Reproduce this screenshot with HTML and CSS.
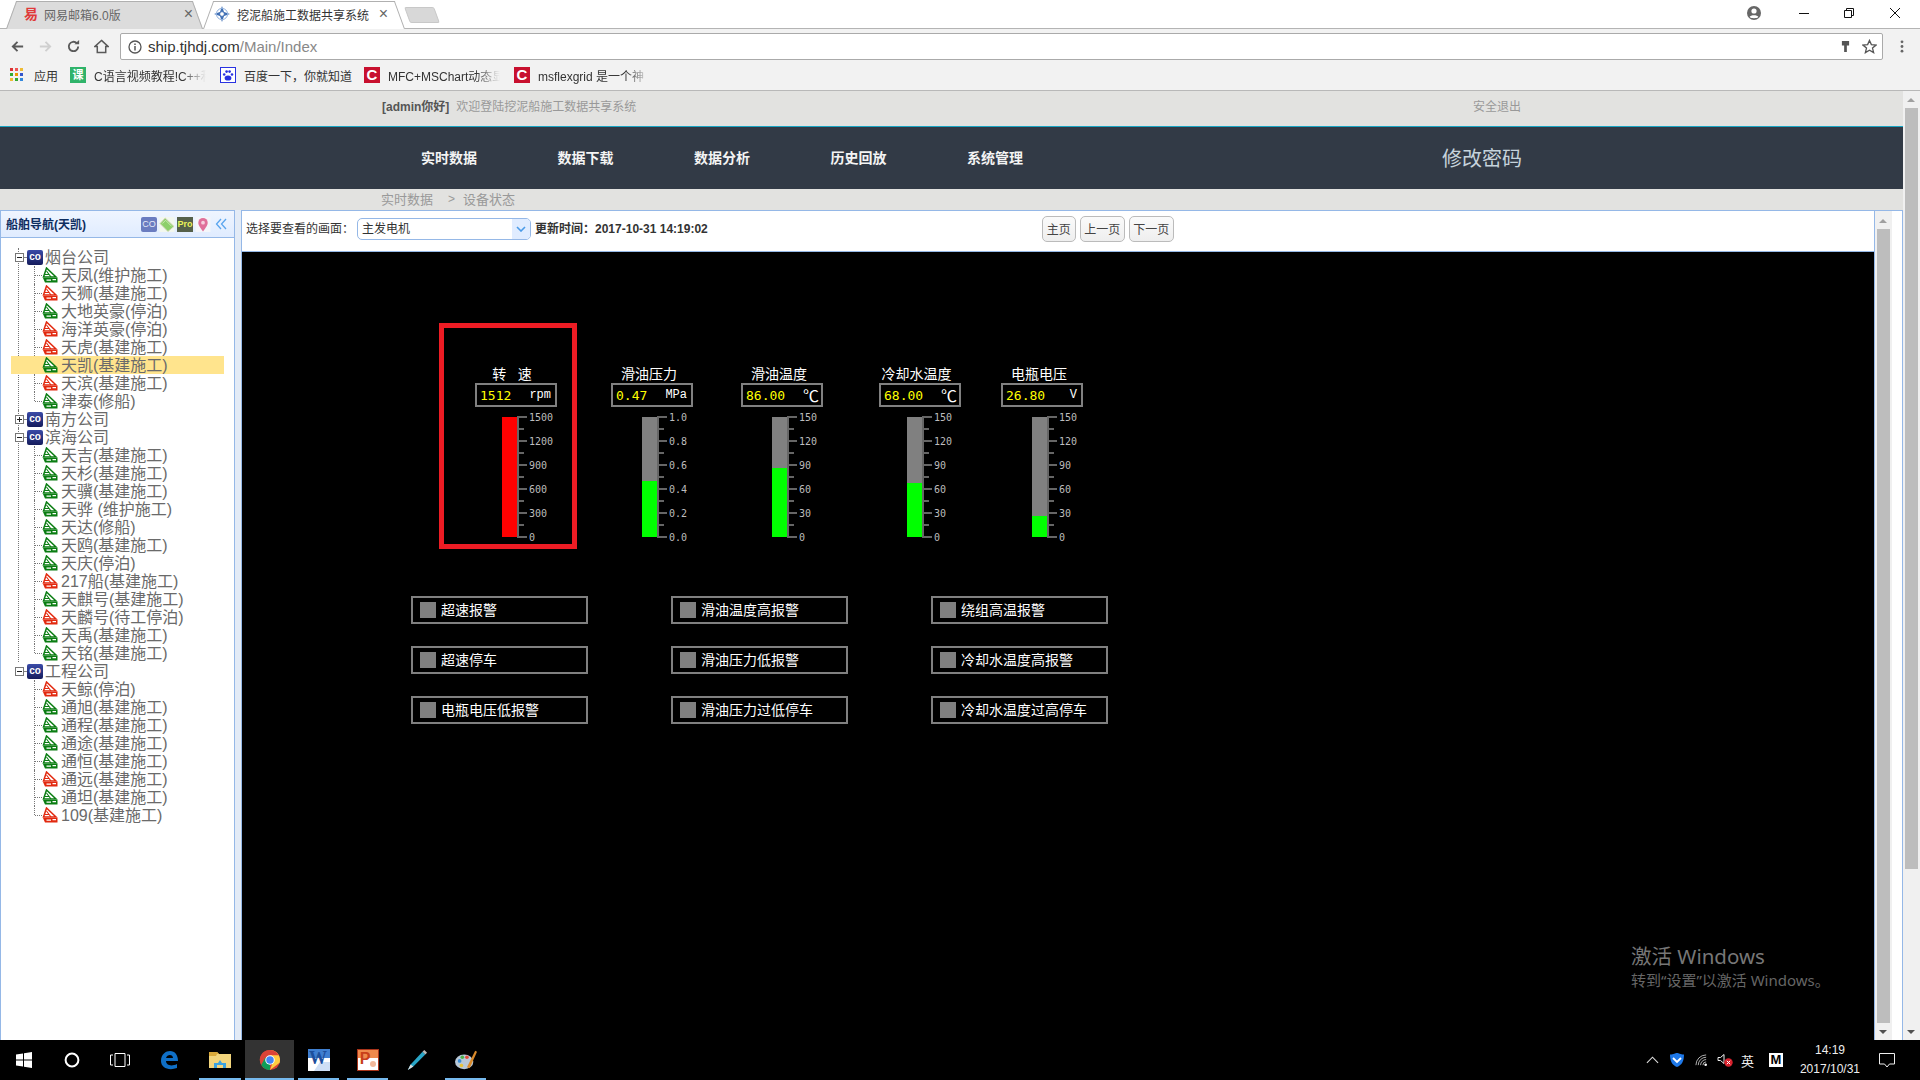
FILE: index.html
```html
<!DOCTYPE html>
<html lang="zh-CN">
<head>
    <meta charset="UTF-8">
    <meta name="viewport" content="width=device-width, initial-scale=1.0">
    <title>挖泥船施工数据共享系统</title>
    <link rel="stylesheet" href="styles.css">
</head>
<body>
    <svg class="defs" width="0" height="0">
        <symbol id="ship" viewBox="0 0 16 16">
            <path d="M4.5 1 L1.5 10 H14 Z" fill="#fff" stroke="currentColor" stroke-width="1.5"/>
            <path d="M4.5 4 L9 10 M3 7.5 H7" stroke="currentColor" stroke-width="1.1" fill="none"/>
            <path d="M1 11 H15.5 V15.5 H3 Z" fill="currentColor"/>
            <path d="M4.5 13.2 H9 M10.5 12.6 H14" stroke="#fff" stroke-width="1.3"/>
        </symbol>
        <symbol id="minus" viewBox="0 0 9 9">
            <rect x=".5" y=".5" width="8" height="8" fill="#fff" stroke="#777"/>
            <path d="M2 4.5 H7" stroke="#222"/>
        </symbol>
        <symbol id="plus" viewBox="0 0 9 9">
            <rect x=".5" y=".5" width="8" height="8" fill="#fff" stroke="#777"/>
            <path d="M2 4.5 H7 M4.5 2 V7" stroke="#222"/>
        </symbol>
    </svg>

    <div class="tabstrip">
        <div class="tab">
            <span class="tab-fav mail">易</span>
            <span class="tab-title">网易邮箱6.0版</span>
            <span class="tab-close">×</span>
        </div>
        <div class="tab active">
            <svg class="tab-fav" viewBox="0 0 16 16"><path d="M8 0 L10 6 L16 8 L10 10 L8 16 L6 10 L0 8 L6 6 Z" fill="#3f6fb5"/><circle cx="8" cy="8" r="2.4" fill="#fff" stroke="#3f6fb5"/><circle cx="8" cy="8" r="5.6" fill="none" stroke="#8fb0dc"/></svg>
            <span class="tab-title">挖泥船施工数据共享系统</span>
            <span class="tab-close">×</span>
        </div>
        <div class="newtab"></div>
        <div class="winctl">
            <svg class="profile" viewBox="0 0 14 14"><circle cx="7" cy="7" r="7" fill="#666"/><circle cx="7" cy="5" r="2.6" fill="#fff"/><path d="M2.6 11 C3.5 8.5 10.5 8.5 11.4 11 C10 12.6 4 12.6 2.6 11Z" fill="#fff"/></svg>
            <svg class="winbtn" viewBox="0 0 12 12"><path d="M1 6.5 H11" stroke="#111" fill="none"/></svg>
            <svg class="winbtn" viewBox="0 0 12 12"><path d="M1.5 3.5 H8.5 V10.5 H1.5 Z M3.5 3.5 V1.5 H10.5 V8.5 H8.5" stroke="#111" fill="none"/></svg>
            <svg class="winbtn last" viewBox="0 0 12 12"><path d="M1 1 L11 11 M11 1 L1 11" stroke="#111" fill="none"/></svg>
        </div>
    </div>

    <div class="toolbar">
        <svg class="navicon" viewBox="0 0 16 16"><path d="M14 8 H3 M8 3 L3 8 L8 13" stroke="#5a5a5a" stroke-width="2" fill="none"/></svg>
        <svg class="navicon" viewBox="0 0 16 16"><path d="M2 8 H13 M8 3 L13 8 L8 13" stroke="#cfcfcf" stroke-width="2" fill="none"/></svg>
        <svg class="navicon" viewBox="0 0 16 16"><path d="M13 8 A5 5 0 1 1 11.5 4.4" stroke="#5a5a5a" stroke-width="2" fill="none"/><path d="M9 5.5 H14 V1 Z" fill="#5a5a5a"/></svg>
        <svg class="navicon" viewBox="0 0 16 16"><path d="M8 1.5 L15 8 H12.5 V14.5 H3.5 V8 H1 Z" stroke="#5a5a5a" stroke-width="1.6" fill="none"/></svg>
        <div class="address">
            <svg class="info" viewBox="0 0 14 14"><circle cx="7" cy="7" r="6" stroke="#555" stroke-width="1.3" fill="none"/><path d="M7 6 V10.5 M7 3.5 V5" stroke="#555" stroke-width="1.5"/></svg>
            <span class="url">ship.tjhdj.com<span class="url-path">/Main/Index</span></span>
            <svg class="addr-key" viewBox="0 0 10 14"><path d="M1 1 H9 V6 H6.5 V13 H3.5 V6 H1 Z" fill="#555"/></svg>
            <svg class="addr-star" viewBox="0 0 16 16"><path d="M8 1.5 L10 6 L15 6.5 L11.2 9.7 L12.4 14.5 L8 12 L3.6 14.5 L4.8 9.7 L1 6.5 L6 6 Z" stroke="#555" stroke-width="1.4" fill="none"/></svg>
        </div>
        <svg class="menu-dots" viewBox="0 0 4 14"><circle cx="2" cy="2" r="1.5" fill="#666"/><circle cx="2" cy="7" r="1.5" fill="#666"/><circle cx="2" cy="12" r="1.5" fill="#666"/></svg>
    </div>

    <div class="bookmarks">
        <div class="bm apps-bm">
            <svg class="bm-icon apps" viewBox="0 0 14 14">
                <rect x="0" y="0" width="3" height="3" fill="#d33"/><rect x="5" y="0" width="3" height="3" fill="#e55"/><rect x="10" y="0" width="3" height="3" fill="#eb3"/>
                <rect x="0" y="5" width="3" height="3" fill="#3a3"/><rect x="5" y="5" width="3" height="3" fill="#e90"/><rect x="10" y="5" width="3" height="3" fill="#35c"/>
                <rect x="0" y="10" width="3" height="3" fill="#eb3"/><rect x="5" y="10" width="3" height="3" fill="#3a3"/><rect x="10" y="10" width="3" height="3" fill="#38d"/>
            </svg>
            <span>应用</span>
        </div>
        <div class="bm bm-c"><span class="bm-square green">课</span><span class="bm-text">C语言视频教程!C++和</span></div>
        <div class="bm bm-baidu">
            <svg class="bm-icon" viewBox="0 0 16 16"><rect x=".5" y=".5" width="15" height="15" fill="#fff" stroke="#2932e1"/><ellipse cx="8" cy="11" rx="3.4" ry="2.6" fill="#2932e1"/><circle cx="4.2" cy="7.5" r="1.3" fill="#2932e1"/><circle cx="6.6" cy="4.6" r="1.3" fill="#2932e1"/><circle cx="9.6" cy="4.6" r="1.3" fill="#2932e1"/><circle cx="12" cy="7.5" r="1.3" fill="#2932e1"/></svg>
            <span>百度一下，你就知道</span>
        </div>
        <div class="bm bm-mfc"><span class="bm-square red">C</span><span class="bm-text">MFC+MSChart动态显</span></div>
        <div class="bm bm-flex"><span class="bm-square red">C</span><span class="bm-text">msflexgrid 是一个神</span></div>
    </div>

    <div class="viewport">
        <div class="page">
            <div class="topbar">
                <span class="hello">[admin你好]</span>
                <span class="welcome">欢迎登陆挖泥船施工数据共享系统</span>
                <a class="logout">安全退出</a>
            </div>
            <div class="nav">
                <a class="nav-item">实时数据</a>
                <a class="nav-item">数据下载</a>
                <a class="nav-item">数据分析</a>
                <a class="nav-item">历史回放</a>
                <a class="nav-item">系统管理</a>
                <a class="nav-pass">修改密码</a>
            </div>
            <div class="crumb">
                <span>实时数据</span>
                <span class="crumb-sep">&gt;</span>
                <span>设备状态</span>
            </div>

            <div class="main">
                <div class="side">
                    <div class="side-head">
                        <span class="side-title">船舶导航(天凯)</span>
                        <span class="tool tool-co">CO</span>
                        <svg class="tool" viewBox="0 0 16 16"><rect width="16" height="16" fill="#f2f7ee"/><path d="M0.5 7 L6 1 L15.5 10 L9 15.5 Z" fill="#8ccf6a" stroke="#d8d8c0"/><path d="M3 7 L6.5 3.5 L13 10" stroke="#c8eab0" fill="none"/></svg>
                        <span class="tool tool-pro">Pro</span>
                        <svg class="tool" viewBox="0 0 16 16"><rect width="16" height="16" fill="#f4f6fa"/><path d="M8 15.5 C4 10 3 8 3 6 A5 5 0 0 1 13 6 C13 8 12 10 8 15.5Z" fill="#e0709a"/><circle cx="8" cy="6" r="2" fill="#f6d0de"/></svg>
                        <svg class="collapse" viewBox="0 0 12 12"><path d="M6 1 L1.5 6 L6 11 M11 1 L6.5 6 L11 11" stroke="#5aa5ee" stroke-width="1.3" fill="none"/></svg>
                    </div>
                    <ul class="tree">
                        <li class="root">
                            <div class="root-row"><svg class="expander"><use href="#minus"/></svg><span class="co">co</span><span class="label">烟台公司</span></div>
                            <ul class="kids">
                                <li><svg class="ship run"><use href="#ship"/></svg><span class="label">天凤(维护施工)</span></li>
                                <li><svg class="ship off"><use href="#ship"/></svg><span class="label">天狮(基建施工)</span></li>
                                <li><svg class="ship run"><use href="#ship"/></svg><span class="label">大地英豪(停泊)</span></li>
                                <li><svg class="ship off"><use href="#ship"/></svg><span class="label">海洋英豪(停泊)</span></li>
                                <li><svg class="ship off"><use href="#ship"/></svg><span class="label">天虎(基建施工)</span></li>
                                <li class="selected"><svg class="ship run"><use href="#ship"/></svg><span class="label">天凯(基建施工)</span></li>
                                <li><svg class="ship off"><use href="#ship"/></svg><span class="label">天滨(基建施工)</span></li>
                                <li><svg class="ship run"><use href="#ship"/></svg><span class="label">津泰(修船)</span></li>
                            </ul>
                        </li>
                        <li class="root">
                            <div class="root-row"><svg class="expander"><use href="#plus"/></svg><span class="co">co</span><span class="label">南方公司</span></div>
                        </li>
                        <li class="root">
                            <div class="root-row"><svg class="expander"><use href="#minus"/></svg><span class="co">co</span><span class="label">滨海公司</span></div>
                            <ul class="kids">
                                <li><svg class="ship run"><use href="#ship"/></svg><span class="label">天吉(基建施工)</span></li>
                                <li><svg class="ship run"><use href="#ship"/></svg><span class="label">天杉(基建施工)</span></li>
                                <li><svg class="ship run"><use href="#ship"/></svg><span class="label">天骥(基建施工)</span></li>
                                <li><svg class="ship run"><use href="#ship"/></svg><span class="label">天骅 (维护施工)</span></li>
                                <li><svg class="ship run"><use href="#ship"/></svg><span class="label">天达(修船)</span></li>
                                <li><svg class="ship run"><use href="#ship"/></svg><span class="label">天鸥(基建施工)</span></li>
                                <li><svg class="ship run"><use href="#ship"/></svg><span class="label">天庆(停泊)</span></li>
                                <li><svg class="ship off"><use href="#ship"/></svg><span class="label">217船(基建施工)</span></li>
                                <li><svg class="ship run"><use href="#ship"/></svg><span class="label">天麒号(基建施工)</span></li>
                                <li><svg class="ship off"><use href="#ship"/></svg><span class="label">天麟号(待工停泊)</span></li>
                                <li><svg class="ship run"><use href="#ship"/></svg><span class="label">天禹(基建施工)</span></li>
                                <li><svg class="ship run"><use href="#ship"/></svg><span class="label">天铭(基建施工)</span></li>
                            </ul>
                        </li>
                        <li class="root">
                            <div class="root-row"><svg class="expander"><use href="#minus"/></svg><span class="co">co</span><span class="label">工程公司</span></div>
                            <ul class="kids">
                                <li><svg class="ship off"><use href="#ship"/></svg><span class="label">天鲸(停泊)</span></li>
                                <li><svg class="ship run"><use href="#ship"/></svg><span class="label">通旭(基建施工)</span></li>
                                <li><svg class="ship run"><use href="#ship"/></svg><span class="label">通程(基建施工)</span></li>
                                <li><svg class="ship run"><use href="#ship"/></svg><span class="label">通途(基建施工)</span></li>
                                <li><svg class="ship run"><use href="#ship"/></svg><span class="label">通恒(基建施工)</span></li>
                                <li><svg class="ship off"><use href="#ship"/></svg><span class="label">通远(基建施工)</span></li>
                                <li><svg class="ship run"><use href="#ship"/></svg><span class="label">通坦(基建施工)</span></li>
                                <li><svg class="ship off"><use href="#ship"/></svg><span class="label">109(基建施工)</span></li>
                            </ul>
                        </li>
                    </ul>
                </div>

                <div class="splitter"></div>

                <div class="content">
                    <div class="content-main">
                        <div class="filter">
                            <span class="filter-label">选择要查看的画面：</span>
                            <div class="combo">
                                <span class="combo-text">主发电机</span>
                                <span class="combo-arrow"><svg viewBox="0 0 10 6"><path d="M1 1 L5 5 L9 1" stroke="#4a9be8" stroke-width="1.6" fill="none"/></svg></span>
                            </div>
                            <span class="updated">更新时间：2017-10-31 14:19:02</span>
                            <div class="pager">
                                <a class="btn btn-home">主页</a>
                                <a class="btn">上一页</a>
                                <a class="btn">下一页</a>
                            </div>
                        </div>

                        <div class="canvas">
                            <div class="highlight"></div>

                            <div class="gauges">
                                <div class="gauge g-speed">
                                    <div class="gauge-title">转&nbsp;&nbsp;&nbsp;速</div>
                                    <div class="readout"><span class="val">1512</span><span class="unit">rpm</span></div>
                                    <div class="scale">
                                        <div class="bar"><div class="fill alarm" style="height:120px"></div></div>
                                        <div class="ticks">
                                            <div class="tick major"><i></i><span>1500</span></div>
                                            <div class="tick"><i></i></div>
                                            <div class="tick major"><i></i><span>1200</span></div>
                                            <div class="tick"><i></i></div>
                                            <div class="tick major"><i></i><span>900</span></div>
                                            <div class="tick"><i></i></div>
                                            <div class="tick major"><i></i><span>600</span></div>
                                            <div class="tick"><i></i></div>
                                            <div class="tick major"><i></i><span>300</span></div>
                                            <div class="tick"><i></i></div>
                                            <div class="tick major"><i></i><span>0</span></div>
                                        </div>
                                    </div>
                                </div>

                                <div class="gauge g-press">
                                    <div class="gauge-title">滑油压力</div>
                                    <div class="readout"><span class="val">0.47</span><span class="unit">MPa</span></div>
                                    <div class="scale">
                                        <div class="bar"><div class="fill" style="height:56px"></div></div>
                                        <div class="ticks">
                                            <div class="tick major"><i></i><span>1.0</span></div>
                                            <div class="tick"><i></i></div>
                                            <div class="tick major"><i></i><span>0.8</span></div>
                                            <div class="tick"><i></i></div>
                                            <div class="tick major"><i></i><span>0.6</span></div>
                                            <div class="tick"><i></i></div>
                                            <div class="tick major"><i></i><span>0.4</span></div>
                                            <div class="tick"><i></i></div>
                                            <div class="tick major"><i></i><span>0.2</span></div>
                                            <div class="tick"><i></i></div>
                                            <div class="tick major"><i></i><span>0.0</span></div>
                                        </div>
                                    </div>
                                </div>

                                <div class="gauge g-oil">
                                    <div class="gauge-title">滑油温度</div>
                                    <div class="readout"><span class="val">86.00</span><span class="unit deg">℃</span></div>
                                    <div class="scale">
                                        <div class="bar"><div class="fill" style="height:69px"></div></div>
                                        <div class="ticks">
                                            <div class="tick major"><i></i><span>150</span></div>
                                            <div class="tick"><i></i></div>
                                            <div class="tick major"><i></i><span>120</span></div>
                                            <div class="tick"><i></i></div>
                                            <div class="tick major"><i></i><span>90</span></div>
                                            <div class="tick"><i></i></div>
                                            <div class="tick major"><i></i><span>60</span></div>
                                            <div class="tick"><i></i></div>
                                            <div class="tick major"><i></i><span>30</span></div>
                                            <div class="tick"><i></i></div>
                                            <div class="tick major"><i></i><span>0</span></div>
                                        </div>
                                    </div>
                                </div>

                                <div class="gauge g-water">
                                    <div class="gauge-title">冷却水温度</div>
                                    <div class="readout"><span class="val">68.00</span><span class="unit deg">℃</span></div>
                                    <div class="scale">
                                        <div class="bar"><div class="fill" style="height:54px"></div></div>
                                        <div class="ticks">
                                            <div class="tick major"><i></i><span>150</span></div>
                                            <div class="tick"><i></i></div>
                                            <div class="tick major"><i></i><span>120</span></div>
                                            <div class="tick"><i></i></div>
                                            <div class="tick major"><i></i><span>90</span></div>
                                            <div class="tick"><i></i></div>
                                            <div class="tick major"><i></i><span>60</span></div>
                                            <div class="tick"><i></i></div>
                                            <div class="tick major"><i></i><span>30</span></div>
                                            <div class="tick"><i></i></div>
                                            <div class="tick major"><i></i><span>0</span></div>
                                        </div>
                                    </div>
                                </div>

                                <div class="gauge g-volt">
                                    <div class="gauge-title">电瓶电压</div>
                                    <div class="readout"><span class="val">26.80</span><span class="unit">V</span></div>
                                    <div class="scale">
                                        <div class="bar"><div class="fill" style="height:21px"></div></div>
                                        <div class="ticks">
                                            <div class="tick major"><i></i><span>150</span></div>
                                            <div class="tick"><i></i></div>
                                            <div class="tick major"><i></i><span>120</span></div>
                                            <div class="tick"><i></i></div>
                                            <div class="tick major"><i></i><span>90</span></div>
                                            <div class="tick"><i></i></div>
                                            <div class="tick major"><i></i><span>60</span></div>
                                            <div class="tick"><i></i></div>
                                            <div class="tick major"><i></i><span>30</span></div>
                                            <div class="tick"><i></i></div>
                                            <div class="tick major"><i></i><span>0</span></div>
                                        </div>
                                    </div>
                                </div>
                            </div>

                            <div class="alarms">
                                <div class="alarm-box"><i></i>超速报警</div>
                                <div class="alarm-box"><i></i>滑油温度高报警</div>
                                <div class="alarm-box"><i></i>绕组高温报警</div>
                                <div class="alarm-box"><i></i>超速停车</div>
                                <div class="alarm-box"><i></i>滑油压力低报警</div>
                                <div class="alarm-box"><i></i>冷却水温度高报警</div>
                                <div class="alarm-box"><i></i>电瓶电压低报警</div>
                                <div class="alarm-box"><i></i>滑油压力过低停车</div>
                                <div class="alarm-box"><i></i>冷却水温度过高停车</div>
                            </div>

                            <div class="activate">
                                <div class="activate-big">激活 Windows</div>
                                <div class="activate-small">转到“设置”以激活 Windows。</div>
                            </div>
                        </div>
                    </div>
                    <div class="scrollbar inner">
                        <div class="arrow-up"></div>
                        <div class="thumb"></div>
                        <div class="arrow-down"></div>
                    </div>
                </div>
            </div>
        </div>
        <div class="scrollbar outer">
            <div class="arrow-up"></div>
            <div class="thumb"></div>
            <div class="arrow-down"></div>
        </div>
    </div>

    <div class="taskbar">
        <div class="slot sys"><svg class="ti" viewBox="0 0 16 16"><path d="M0 2.4 L7 1.4 V7.5 H0 Z M8 1.2 L16 0 V7.5 H8 Z M0 8.5 H7 V14.6 L0 13.6 Z M8 8.5 H16 V16 L8 14.8 Z" fill="#fff"/></svg></div>
        <div class="slot sys"><svg class="ti" viewBox="0 0 16 16"><circle cx="8" cy="8" r="6.4" stroke="#fff" stroke-width="2" fill="none"/></svg></div>
        <div class="slot sys"><svg class="ti wide" viewBox="0 0 20 14"><path d="M5 .5 H15 V13.5 H5 Z" stroke="#fff" fill="none"/><path d="M3 2 H.5 V12 H3 M17 2 H19.5 V12 H17" stroke="#fff" fill="none"/></svg></div>
        <div class="slot pad"><svg class="ta" viewBox="0 0 22 22"><path d="M3 12 C3 5 8 2 12 2 C17 2 20 6 20 12 H8 C8 16 13 18 19 15 V19 C11 22 3 19 3 12Z M8 9 H15 C15 5 9 5 8 9Z" fill="#0f6fc6" fill-rule="evenodd"/></svg></div>
        <div class="slot pad running"><svg class="ta" viewBox="0 0 22 22"><path d="M0 3 H8 L10 5 H22 V19 H0 Z" fill="#f2d57c"/><path d="M0 3 H8 L10 5 H8 L7 7 H0 Z" fill="#d9a93a"/><path d="M5 19 V14 H9 L11 11 L13 14 H17 V19 H14 V16 H8 V19Z" fill="#3ba3e0"/></svg></div>
        <div class="slot running current"><svg class="ta" viewBox="0 0 24 24"><circle cx="12" cy="12" r="11" fill="#db4437"/><path d="M12 12 L2.5 17.5 A11 11 0 0 1 3 5.5 Z" fill="#db4437"/><path d="M12 12 L12 23 A11 11 0 0 1 2.5 17.5 L7 9 Z" fill="#0f9d58"/><path d="M12 1 A11 11 0 0 1 22.5 15 L12 23 L16.5 10 L12 7 Z" fill="#ffcd40"/><path d="M12 1 A11 11 0 0 1 21.5 6.8 L12 6.8 L7 9.5 L3 5.5 A11 11 0 0 1 12 1Z" fill="#db4437"/><circle cx="12" cy="12" r="5.2" fill="#fff"/><circle cx="12" cy="12" r="4.1" fill="#4285f4"/></svg></div>
        <div class="slot running"><svg class="ta" viewBox="0 0 22 22"><rect x="0" y="0" width="22" height="22" fill="#fff"/><path d="M0 0 H22 V9 H0Z" fill="#3f7fd0"/><path d="M12 13 H22 V22 H6Z" fill="#cfdff5"/><text x="10" y="15" text-anchor="middle" font-family="Liberation Serif" font-weight="700" font-size="18" fill="#1d4f9c">W</text></svg></div>
        <div class="slot running"><svg class="ta" viewBox="0 0 22 22"><rect x="0" y="0" width="22" height="22" fill="#fff"/><path d="M0 0 H22 V9 H0Z" fill="#ef8a4c"/><rect x=".5" y=".5" width="21" height="21" fill="none" stroke="#a8341a"/><text x="8" y="15" text-anchor="middle" font-family="Liberation Sans" font-weight="700" font-size="16" fill="#c8401a">P</text><circle cx="16" cy="15" r="3" fill="#f3b89a"/></svg></div>
        <div class="slot"><svg class="ta" viewBox="0 0 24 24"><path d="M2 23 L5 17 L18 3 L21 6 L8 19 Z" fill="#2aa6c8"/><path d="M18 3 L20 1 L23 4 L21 6 Z" fill="#bbb"/><path d="M2 23 L5 17 L8 19 Z" fill="#ddd"/></svg></div>
        <div class="slot running"><svg class="ta" viewBox="0 0 24 24"><ellipse cx="10" cy="14" rx="10" ry="8" fill="#b9c9d8"/><circle cx="5" cy="13" r="2" fill="#3a8fd8"/><circle cx="8" cy="9" r="2" fill="#4bb04b"/><circle cx="13" cy="9" r="2" fill="#e24a3a"/><circle cx="7" cy="18" r="2" fill="#e8c43a"/><path d="M13 20 L22 2 L24 3 L16 21 Z" fill="#d98a2b"/></svg></div>

        <div class="tray">
            <svg class="tray-chev" viewBox="0 0 14 8"><path d="M1 7 L7 1 L13 7" stroke="#ddd" stroke-width="1.2" fill="none"/></svg>
            <svg class="tray-shield" viewBox="0 0 16 16"><path d="M1 2.5 C5 2.5 6 1 8 1 C10 1 11 2.5 15 2.5 C15 9 13 13 8 15 C3 13 1 9 1 2.5Z" fill="#1e78e8"/><path d="M4 6 L8 10 L12 6" stroke="#fff" stroke-width="1.8" fill="none"/></svg>
            <svg class="tray-wifi" viewBox="0 0 14 14"><path d="M1 12 A11 11 0 0 1 12 1 M3.5 12 A8.5 8.5 0 0 1 12 3.5 M6 12 A6 6 0 0 1 12 6 M8.5 12 A3.5 3.5 0 0 1 12 8.5" stroke="#bbb" fill="none"/><circle cx="11.5" cy="11.5" r="1.4" fill="#fff"/></svg>
            <svg class="tray-vol" viewBox="0 0 16 14"><path d="M1 4.5 H3.5 L7 1.5 V10.5 L3.5 7.5 H1 Z" stroke="#eee" fill="none"/><circle cx="11.5" cy="9.5" r="4.2" fill="#d8202c"/><path d="M9.8 7.8 L13.2 11.2 M13.2 7.8 L9.8 11.2" stroke="#fff"/></svg>
            <span class="tray-ime">英</span>
            <span class="tray-m">M</span>
            <div class="clock"><span>14:19</span><span>2017/10/31</span></div>
            <svg class="tray-note" viewBox="0 0 16 15"><path d="M.5 .5 H15.5 V11 H10.5 L8 14 L5.5 11 H.5 Z" stroke="#eee" fill="none"/></svg>
        </div>
    </div>
</body>
</html>
```

FILE: styles.css
```css
* {
    box-sizing: border-box;
}
html, body {
    margin: 0;
    height: 100%;
}
body {
    width: 1920px;
    height: 1080px;
    overflow: hidden;
    display: flex;
    flex-direction: column;
    font-family: "Liberation Sans", "Noto Sans CJK SC", sans-serif;
    font-size: 12px;
    background: #f2f2f2;
}
ul {
    list-style: none;
    margin: 0;
    padding: 0;
}
.defs {
    position: absolute;
}

/* browser chrome */
.tabstrip {
    height: 29px;
    display: flex;
    align-items: flex-end;
    padding-left: 6px;
    background: #fff;
    border-bottom: 1px solid #b4b4b4;
}
.tab {
    position: relative;
    width: 197px;
    height: 28px;
    margin-bottom: -1px;
    display: flex;
    align-items: center;
    padding: 0 10px 2px 18px;
    color: #666;
    z-index: 1;
}
.tab::before, .tab::after {
    content: "";
    position: absolute;
    top: 0;
    bottom: 0;
    width: 55%;
    background: #dcdcdc;
    border-top: 1px solid #b0b0b0;
    z-index: -1;
}
.tab::before {
    left: 0;
    border-left: 1px solid #b0b0b0;
    transform: skewX(-20deg);
    transform-origin: bottom left;
}
.tab::after {
    right: 0;
    border-right: 1px solid #b0b0b0;
    transform: skewX(20deg);
    transform-origin: bottom right;
}
.tab.active {
    width: 202px;
    color: #333;
    padding: 0 17px 2px 11px;
}
.tab.active::before, .tab.active::after {
    background: #fff;
}
.tab.active .tab-fav {
    margin-right: 7px;
}
.tab-fav {
    width: 16px;
    height: 16px;
    margin-right: 4px;
    flex: none;
}
.mail {
    color: #e03a3a;
    font-weight: 700;
    font-size: 14px;
    line-height: 16px;
}
.tab-title {
    flex: 1;
    white-space: nowrap;
}
.tab-close {
    font-size: 16px;
    line-height: 16px;
    color: #666;
}
.newtab {
    width: 30px;
    height: 16px;
    margin: 0 0 5px 2px;
    background: #d8d8d8;
    border: 1px solid #c8c8c8;
    border-radius: 2px;
    transform: skewX(20deg);
}
.winctl {
    margin-left: auto;
    align-self: stretch;
    display: flex;
    align-items: center;
    padding-bottom: 3px;
}
.profile {
    width: 14px;
    height: 14px;
    margin-right: 37px;
}
.winbtn {
    width: 12px;
    height: 12px;
    margin-right: 33px;
}
.winbtn.last {
    margin-left: 1px;
    margin-right: 19px;
}
.toolbar {
    height: 31px;
    display: flex;
    align-items: center;
    padding: 4px 0 0 10px;
}
.navicon {
    width: 15px;
    height: 15px;
    margin-right: 13px;
    flex: none;
}
.address {
    width: 1763px;
    height: 27px;
    margin-left: -2px;
    display: flex;
    align-items: center;
    padding: 0 5px 0 7px;
    background: #fff;
    border: 1px solid #aaa;
    border-radius: 2px;
}
.info {
    width: 14px;
    height: 14px;
    margin-right: 6px;
}
.url {
    flex: 1;
    font-size: 15px;
    color: #333;
}
.url-path {
    color: #888;
}
.addr-key {
    width: 9px;
    height: 13px;
    margin-right: 12px;
}
.addr-star {
    width: 15px;
    height: 15px;
}
.menu-dots {
    width: 4px;
    height: 13px;
    margin-left: 17px;
}
.bookmarks {
    height: 31px;
    display: flex;
    align-items: center;
    padding-left: 10px;
    border-bottom: 1px solid #b8b8b8;
    color: #333;
}
.bm {
    display: flex;
    align-items: center;
    white-space: nowrap;
    flex: none;
}
.bm-icon {
    width: 16px;
    height: 16px;
    margin-right: 8px;
}
.bm-icon.apps {
    width: 14px;
    height: 14px;
    margin-right: 10px;
}
.apps-bm {
    width: 60px;
}
.bm-c {
    width: 150px;
}
.bm-baidu {
    width: 144px;
}
.bm-mfc {
    width: 150px;
}
.bm-square {
    width: 16px;
    height: 16px;
    margin-right: 8px;
    color: #fff;
    text-align: center;
    line-height: 16px;
    font-size: 11px;
    font-weight: 700;
    flex: none;
}
.bm-square.green {
    background: #2fb36a;
}
.bm-square.red {
    background: #c8102e;
    font-size: 15px;
}
.bm-text {
    -webkit-mask-image: linear-gradient(to right, #000 88px, transparent 112px);
    mask-image: linear-gradient(to right, #000 88px, transparent 112px);
}

/* page */
.viewport {
    flex: 1;
    min-height: 0;
    display: flex;
}
.page {
    flex: 1;
    min-width: 0;
    display: flex;
    flex-direction: column;
    background: #e2e2e0;
}
.topbar {
    height: 36px;
    display: flex;
    align-items: center;
    padding: 0 382px 7px;
    border-bottom: 1px solid #18a5c4;
    color: #999;
}
.hello {
    font-weight: 700;
    color: #555;
    margin-right: 7px;
}
.logout {
    margin-left: auto;
}
.nav {
    height: 62px;
    display: flex;
    align-items: center;
    gap: 80.5px;
    padding: 0 381px 2px 421px;
    background: #323a46;
}
.nav-item {
    font-size: 14px;
    font-weight: 700;
    color: #f4f4f4;
}
.nav-pass {
    margin-left: auto;
    font-size: 20px;
    color: #c6d3dc;
}
.crumb {
    height: 21px;
    display: flex;
    align-items: center;
    padding: 0 0 2px 381px;
    font-size: 13px;
    color: #999;
}
.crumb-sep {
    margin: 0 8px 0 15px;
    font-size: 12px;
}
.main {
    flex: 1;
    min-height: 0;
    display: flex;
}

/* tree panel */
.side {
    width: 235px;
    flex: none;
    background: #fff;
    border: 1px solid #95b8e7;
    border-bottom: 0;
    overflow: hidden;
}
.side-head {
    height: 27px;
    display: flex;
    align-items: center;
    padding: 0 7px 0 5px;
    background: linear-gradient(#eff5ff, #e0ecff);
    border-bottom: 1px solid #95b8e7;
}
.side-title {
    flex: 1;
    font-weight: 700;
    color: #0e2d5f;
    padding-bottom: 2px;
}
.tool {
    width: 16px;
    height: 15px;
    margin-left: 2px;
    flex: none;
}
.tool-co {
    background: #6a7cc0;
    color: #e4e8f8;
    font-size: 9px;
    line-height: 15px;
    text-align: center;
    border-radius: 2px;
}
.tool-pro {
    background: #55604a;
    color: #eaf25a;
    font-size: 9px;
    font-weight: 700;
    line-height: 15px;
    text-align: center;
}
.collapse {
    width: 12px;
    height: 12px;
    margin-left: 4px;
}
.tree {
    margin: 10px 0 0 17px;
    font-size: 16px;
    color: #6a6a6a;
}
.root {
    border-left: 1px dotted #777;
}
.root:last-child {
    border-left-color: transparent;
}
.root-row {
    height: 18px;
    display: flex;
    align-items: center;
    white-space: nowrap;
    background: linear-gradient(#888, #888) no-repeat 4px 9px / 4px 1px;
}
.label {
    margin-top: -2px;
}
.expander {
    width: 9px;
    height: 9px;
    margin: 0 3px 0 -4px;
    flex: none;
}
.co {
    width: 16px;
    height: 15px;
    margin-right: 2px;
    flex: none;
    background: linear-gradient(#3b4ba8, #151c5c);
    border-radius: 2px;
    color: #fff;
    font-size: 10px;
    font-weight: 700;
    line-height: 13px;
    text-align: center;
}
.kids {
    margin-left: 15px;
}
.kids li {
    position: relative;
    height: 18px;
    display: flex;
    align-items: center;
    padding-left: 7px;
    white-space: nowrap;
    border-left: 1px dotted #777;
}
.kids li::before {
    content: "";
    position: absolute;
    left: 0;
    top: 9px;
    width: 7px;
    border-top: 1px dotted #777;
}
.kids li:last-child {
    border-left-color: transparent;
}
.kids li:last-child::after {
    content: "";
    position: absolute;
    left: -1px;
    top: 0;
    height: 9px;
    border-left: 1px dotted #777;
}
.kids li.selected::after {
    content: "";
    position: absolute;
    left: -24px;
    top: 0;
    width: 213px;
    height: 18px;
    background: #ffe48d;
}
.kids li.selected > * {
    position: relative;
    z-index: 1;
}
.ship {
    width: 16px;
    height: 16px;
    margin-right: 3px;
    flex: none;
}
.ship.run {
    color: #0a7d12;
}
.ship.off {
    color: #e2290f;
}

.splitter {
    width: 6px;
    flex: none;
    background: #e3ebf6;
}

/* right panel */
.content {
    flex: 1;
    min-width: 0;
    display: flex;
    background: #fff;
    border: 1px solid #95b8e7;
    border-bottom: 0;
    padding-right: 10px;
}
.content-main {
    flex: 1;
    min-width: 0;
    display: flex;
    flex-direction: column;
    border-right: 1px solid #95b8e7;
}
.filter {
    height: 41px;
    flex: none;
    display: flex;
    align-items: center;
    padding: 0 0 4px 4px;
    border-bottom: 1px solid #95b8e7;
    color: #333;
}
.filter-label, .updated, .combo-text {
    padding-bottom: 3px;
}
.combo {
    width: 174px;
    height: 22px;
    margin: 0 4px 0 3px;
    display: flex;
    align-items: center;
    border: 1px solid #95b8e7;
    border-radius: 5px;
    overflow: hidden;
}
.combo-text {
    flex: 1;
    padding-left: 4px;
}
.combo-arrow {
    width: 18px;
    height: 100%;
    display: flex;
    align-items: center;
    justify-content: center;
    background: #e0ecff;
}
.combo-arrow svg {
    width: 10px;
    height: 6px;
}
.updated {
    font-weight: 700;
}
.pager {
    margin-left: 334px;
    display: flex;
    gap: 4px;
}
.btn {
    width: 45px;
    height: 26px;
    display: flex;
    align-items: center;
    justify-content: center;
    padding-bottom: 2px;
    background: linear-gradient(#fafafa, #eee);
    border: 1px solid #bbb;
    border-radius: 5px;
    color: #444;
}
.btn-home {
    width: 34px;
}

/* monitor canvas */
.canvas {
    position: relative;
    flex: 1;
    min-height: 0;
    padding: 114px 0 0 169px;
    background: #000;
}
.highlight {
    position: absolute;
    left: 197px;
    top: 71px;
    width: 138px;
    height: 226px;
    border: 5px solid #ed1c24;
}
.gauges {
    display: flex;
    margin-left: 64px;
}
.gauge {
    width: 82px;
    flex: none;
}
.g-speed { margin-right: 54px; }
.g-press { margin-right: 48px; }
.g-oil { margin-right: 56px; }
.g-water { margin-right: 40px; }
.gauge-title {
    height: 17px;
    padding-right: 6px;
    color: #fff;
    font-size: 14px;
    line-height: 17px;
    text-align: center;
    white-space: nowrap;
}
.g-speed .gauge-title {
    padding-right: 8px;
}
.g-water .gauge-title {
    margin: 0 -4px;
    padding-right: 7px;
}
.readout {
    height: 24px;
    display: flex;
    align-items: center;
    justify-content: space-between;
    padding: 0 4px 0 3px;
    border: 2px solid #808080;
    font-family: "DejaVu Sans Mono", monospace;
}
.val {
    color: #ff0;
    font-size: 13px;
}
.unit {
    color: #fff;
    font-size: 12px;
    font-family: "Liberation Mono", monospace;
}
.unit.deg {
    margin-right: -2px;
    font-size: 16px;
    font-family: "Noto Sans CJK SC", sans-serif;
}
.scale {
    height: 122px;
    margin-top: 9px;
    display: flex;
}
.g-speed .scale { margin-left: 27px; }
.g-press .scale, .g-oil .scale, .g-volt .scale { margin-left: 31px; }
.g-water .scale { margin-left: 28px; }
.bar {
    position: relative;
    width: 15px;
    height: 120px;
    margin-top: 1px;
    flex: none;
    display: flex;
    align-items: flex-end;
    background: #808080;
}
.fill {
    width: 100%;
    background: #0f0;
}
.fill.alarm {
    background: #f00;
}
.ticks {
    display: flex;
    flex-direction: column;
    justify-content: space-between;
    border-left: 2px solid #666;
    height: 122px;
}
.tick {
    height: 2px;
    display: flex;
    align-items: center;
}
.tick i {
    width: 5px;
    height: 2px;
    background: #666;
}
.tick.major i {
    width: 8px;
}
.tick span {
    margin-left: 2px;
    color: #bdbdbd;
    font-family: "DejaVu Sans Mono", monospace;
    font-size: 10px;
}
.alarms {
    display: grid;
    grid-template-columns: repeat(3, 177px);
    grid-auto-rows: 28px;
    column-gap: 83px;
    row-gap: 22px;
    margin-top: 58px;
}
.alarm-box {
    display: flex;
    align-items: center;
    padding: 0 0 2px 7px;
    border: 2px solid #808080;
    color: #fff;
    font-size: 14px;
    white-space: nowrap;
}
.alarm-box i {
    width: 16px;
    height: 16px;
    margin: 2px 5px 0 0;
    background: #808080;
    flex: none;
}
.activate {
    position: absolute;
    left: 1389px;
    top: 691px;
    font-family: "Noto Sans", "Noto Sans CJK SC", sans-serif;
}
.activate-big {
    font-size: 20.5px;
    line-height: 26px;
    color: #777;
}
.activate-small {
    font-size: 15px;
    line-height: 22px;
    color: #666;
    white-space: nowrap;
}

/* scrollbars */
.scrollbar {
    width: 17px;
    flex: none;
    display: flex;
    flex-direction: column;
    background: #f0f0f0;
}
.thumb {
    background: #bdbdbd;
    margin: 0 2px;
}
.arrow-up, .arrow-down {
    width: 0;
    height: 0;
    margin-left: 4px;
    border-left: 4px solid transparent;
    border-right: 4px solid transparent;
}
.arrow-up {
    border-bottom: 4px solid #a0a0a0;
}
.arrow-down {
    border-top: 4px solid #505050;
}
.outer .arrow-up { margin-top: 7px; }
.outer .thumb { margin-top: 6px; height: 761px; }
.outer .arrow-down { margin-top: auto; margin-bottom: 6px; }
.inner .arrow-up { margin-top: 8px; }
.inner .thumb { margin-top: 6px; height: 794px; }
.inner .arrow-down { margin-top: auto; margin-bottom: 6px; }

/* taskbar */
.taskbar {
    height: 40px;
    flex: none;
    display: flex;
    background: #000;
    color: #eee;
}
.slot {
    position: relative;
    width: 49px;
    display: flex;
    align-items: center;
    justify-content: center;
    flex: none;
}
.slot.sys {
    width: 48px;
}
.slot.pad {
    width: 50.5px;
}
.slot.running::after {
    content: "";
    position: absolute;
    left: 4px;
    right: 4px;
    bottom: 0;
    height: 2px;
    background: #76b9ed;
}
.slot.current {
    background: #333;
}
.slot.current::after {
    left: 0;
    right: 0;
}
.ti {
    width: 16px;
    height: 16px;
}
.ti.wide {
    width: 20px;
    height: 14px;
}
.ta {
    width: 22px;
    height: 22px;
}
.tray {
    margin-left: auto;
    display: flex;
    align-items: center;
    padding-right: 25px;
}
.tray-chev {
    width: 13px;
    height: 8px;
    margin-right: 10px;
}
.tray-shield {
    width: 16px;
    height: 16px;
    margin-right: 10px;
}
.tray-wifi {
    width: 13px;
    height: 13px;
    margin-right: 9px;
}
.tray-vol {
    width: 16px;
    height: 14px;
    margin-right: 8px;
}
.tray-ime {
    font-size: 13px;
    margin-right: 15px;
}
.tray-m {
    width: 14px;
    height: 14px;
    margin-right: 17px;
    background: #fff;
    color: #000;
    font-weight: 700;
    font-size: 13px;
    line-height: 14px;
    text-align: center;
}
.clock {
    display: flex;
    flex-direction: column;
    align-items: center;
    gap: 4px;
    margin-right: 19px;
    line-height: 15px;
}
.tray-note {
    width: 16px;
    height: 15px;
}
```
